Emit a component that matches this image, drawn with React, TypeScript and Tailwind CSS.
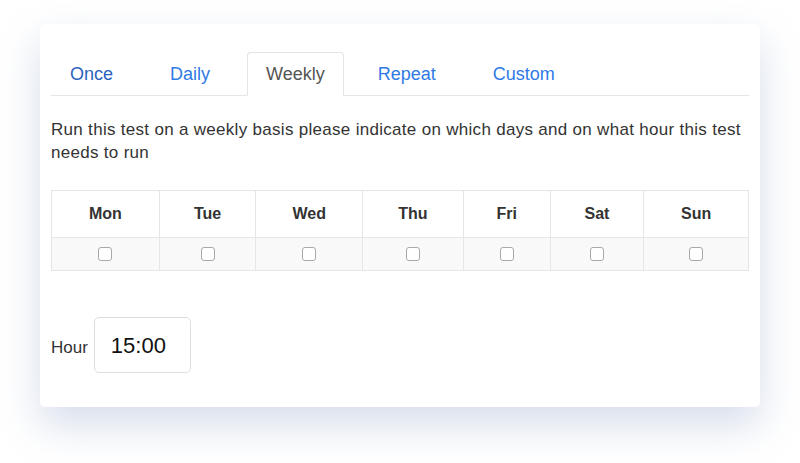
import React from "react";

const days = [
  { d: "Mon", w: 108 },
  { d: "Tue", w: 97 },
  { d: "Wed", w: 107 },
  { d: "Thu", w: 101 },
  { d: "Fri", w: 87 },
  { d: "Sat", w: 94 },
  { d: "Sun", w: 104 },
];

export default function App() {
  return (
    <div
      className="w-[800px] h-[463px] bg-white pt-[24px] pl-[40px]"
      style={{ fontFamily: '"Liberation Sans", Arial, Helvetica, sans-serif' }}
    >
      <div className="w-[720px] h-[383px] bg-white rounded-[5px] shadow-[0_18px_40px_rgba(165,180,210,0.45)] pt-[29px] px-[11px]">
        {/* Tabs */}
        <div className="flex items-end border-b border-[#e6e6e6] h-[43px]">
          <div className="px-[19px] mr-[20px] text-[18px] text-[#2a62c0] leading-[44px] h-[44px] -mb-px">Once</div>
          <div className="px-[18px] mr-[19px] text-[18px] text-[#2f7ae5] leading-[44px] h-[44px] -mb-px">Daily</div>
          <div className="px-[18px] mr-[16px] text-[18px] text-[#555] leading-[42px] h-[44px] -mb-px border border-[#e3e3e3] border-b-white rounded-t-[4px] bg-white">
            Weekly
          </div>
          <div className="px-[18px] mr-[21px] text-[18px] text-[#2f7ae5] leading-[44px] h-[44px] -mb-px">Repeat</div>
          <div className="px-[18px] text-[18px] text-[#2f7ae5] leading-[44px] h-[44px] -mb-px">Custom</div>
        </div>

        <p className="mt-[22px] text-[17px] leading-[23px] tracking-[0.3px] text-[#333]">
          Run this test on a weekly basis please indicate on which days and on what hour this test needs to run
        </p>

        {/* Table */}
        <div className="mt-[26px] w-[698px] border border-[#e6e6e6]">
          <div className="flex h-[46px] bg-white">
            {days.map((x, i) => (
              <div
                key={x.d}
                style={{ width: x.w }}
                className={`flex items-center justify-center text-[16px] font-bold text-[#333] ${i < 6 ? "border-r border-[#e6e6e6]" : ""}`}
              >
                {x.d}
              </div>
            ))}
          </div>
          <div className="flex h-[33px] bg-[#f9f9f9] border-t border-[#e6e6e6]">
            {days.map((x, i) => (
              <div
                key={x.d}
                style={{ width: x.w }}
                className={`flex items-center justify-center ${i < 6 ? "border-r border-[#e6e6e6]" : ""}`}
              >
                <span className="w-[14px] h-[14px] rounded-[3px] border border-[#a9a9a9] bg-white" />
              </div>
            ))}
          </div>
        </div>

        {/* Hour */}
        <div className="mt-[46px] flex items-center">
          <span className="text-[17px] text-[#333] mt-[5px]">Hour</span>
          <div className="ml-[6px] w-[97px] h-[56px] border border-[#dedede] rounded-[5px] flex items-center pl-[16px] text-[22px] text-[#111]">
            15:00
          </div>
        </div>
      </div>
    </div>
  );
}
